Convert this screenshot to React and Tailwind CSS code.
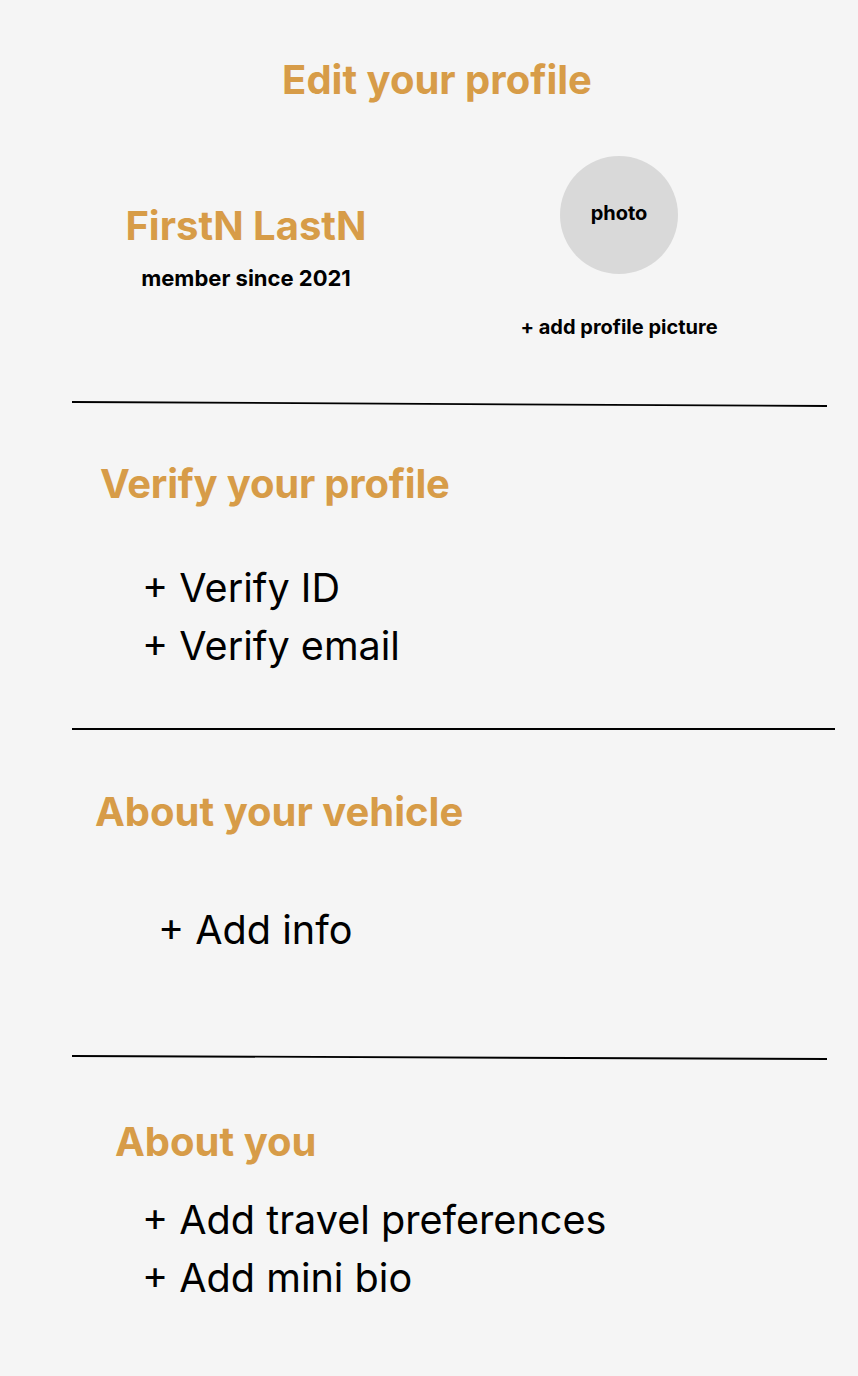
import React from "react";

function Rule({ x1, y1, x2, y2 }) {
  return (
    <svg className="block" width="858" height="8" viewBox="0 0 858 8">
      <line x1={x1} y1={y1} x2={x2} y2={y2} stroke="#000" strokeWidth="1.8" />
    </svg>
  );
}

const H = "text-[40px] leading-[40px] font-bold text-[#d79c48] whitespace-nowrap";
const ITEM = "text-[39.6px] leading-[44px] text-black whitespace-nowrap";

export default function App() {
  return (
    <div
      className="w-[858px] min-h-[1376px] bg-[#f5f5f5] flex flex-col"
      style={{ fontFamily: "Inter, 'Noto Sans', sans-serif" }}
    >
      <h1 className={`${H} mt-[60px] h-[40px] text-center pl-[16px]`}>Edit your profile</h1>

      <div className="mt-[56px] flex">
        <div className="w-[492px] flex flex-col items-center pt-[50px]">
          <div className={`${H} h-[40px]`}>FirstN LastN</div>
          <div className="mt-[20px] h-[24px] text-[22px] leading-[24px] font-bold text-black">member since 2021</div>
        </div>
        <div className="w-[254px] flex flex-col items-center">
          <div className="w-[118px] h-[118px] rounded-full bg-[#d9d9d9] flex items-center justify-center text-[20px] font-bold text-black">
            <span className="-translate-y-[2px]">photo</span>
          </div>
          <div className="mt-[42px] h-[22px] text-[20px] leading-[22px] font-bold text-black whitespace-nowrap">+ add profile picture</div>
        </div>
      </div>

      <div className="mt-[62px]">
        <Rule x1={72} y1={2} x2={827} y2={6} />
      </div>

      <h2 className={`${H} mt-[56px] pl-[100px] tracking-[-0.2px]`}>Verify your profile</h2>
      <div className={`${ITEM} mt-[62px] pl-[142px]`}>+ Verify ID</div>
      <div className={`${ITEM} mt-[14px] pl-[142px]`}>+ Verify email</div>

      <div className="mt-[57px]">
        <Rule x1={72} y1={4} x2={835} y2={4} />
      </div>

      <h2 className={`${H} mt-[59px] pl-[95px]`}>About your vehicle</h2>
      <div className={`${ITEM} mt-[76px] pl-[158px]`}>+ Add info</div>

      <div className="mt-[100px]">
        <Rule x1={72} y1={4} x2={827} y2={7} />
      </div>

      <h2 className={`${H} mt-[62px] pl-[115px]`}>About you</h2>
      <div className={`${ITEM} mt-[36px] pl-[142px]`}>+ Add travel preferences</div>
      <div className={`${ITEM} mt-[14px] pl-[142px]`}>+ Add mini bio</div>
    </div>
  );
}
